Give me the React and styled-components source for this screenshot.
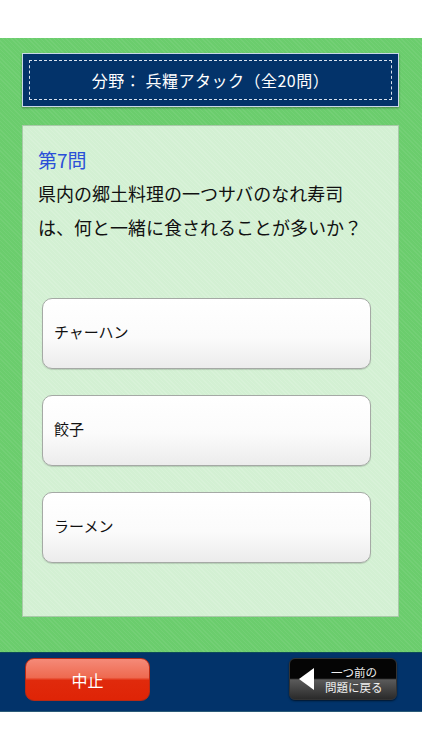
import React from "react";
import styled, { createGlobalStyle } from "styled-components";

const Global = createGlobalStyle`
  html, body { margin: 0; padding: 0; background: #fff; }
  body { font-family: "Noto Sans CJK JP", "Noto Sans", sans-serif; }
`;

const Page = styled.div`
  width: 422px;
  height: 750px;
  display: flex;
  flex-direction: column;
  background: #fff;
`;

const TopGap = styled.div`
  height: 38px;
  flex: none;
`;

const Field = styled.main`
  height: 614px;
  flex: none;
  box-sizing: border-box;
  padding: 15px 23px 0 22px;
  background-color: #6bcd6d;
  background-image: repeating-linear-gradient(45deg, rgba(255,255,255,0.06) 0 1px, transparent 1px 3px);
  display: flex;
  flex-direction: column;
  gap: 18px;
`;

const Banner = styled.header`
  height: 54px;
  box-sizing: border-box;
  background: #03336a;
  border: 1px solid #c8d8e8;
  box-shadow: 0 1px 2px rgba(0,0,0,0.35);
  padding: 6px;
  display: flex;
`;

const BannerInner = styled.div`
  flex: 1;
  border: 1.5px dashed #d8e2ee;
  display: flex;
  align-items: center;
  justify-content: center;
  color: #fff;
  font-size: 16px;
  letter-spacing: 0.5px;
`;

const Card = styled.section`
  height: 492px;
  box-sizing: border-box;
  background-color: #d3f0d3;
  background-image: repeating-linear-gradient(45deg, rgba(255,255,255,0.12) 0 1px, transparent 1px 3px);
  border: 1px solid #a9c9a9;
  padding: 20px 27px 0 15px;
  display: flex;
  flex-direction: column;
`;

const Number = styled.div`
  color: #2a4fd8;
  font-size: 19px;
  line-height: 28px;
`;

const Question = styled.p`
  margin: 2px 0 0;
  color: #111;
  font-size: 18px;
  line-height: 34px;
`;

const Options = styled.div`
  margin-top: 54px;
  padding-left: 4px;
  display: flex;
  flex-direction: column;
  gap: 26px;
`;

const Option = styled.button`
  height: 71px;
  box-sizing: border-box;
  border: 1px solid #a5a9a5;
  border-radius: 10px;
  background: linear-gradient(#ffffff 0%, #fbfbfb 55%, #ececec 100%);
  box-shadow: 0 1px 1px rgba(0,0,0,0.15);
  padding: 0 0 4px 11px;
  text-align: left;
  font-family: inherit;
  font-size: 15px;
  color: #111;
`;

const Footer = styled.footer`
  height: 60px;
  flex: none;
  box-sizing: border-box;
  background: #02336a;
  border-top: 1px solid #0d4a5a;
  border-bottom: 1px solid #2a5a78;
  padding: 5px 25px 0 25px;
  display: flex;
  justify-content: space-between;
  align-items: flex-start;
`;

const StopButton = styled.button`
  width: 125px;
  height: 43px;
  border: 1px solid #b82a14;
  border-radius: 9px;
  background: linear-gradient(#f58a78 0%, #ee6a50 45%, #e02a0c 52%, #df2406 100%);
  color: #fff;
  font-family: inherit;
  font-size: 16px;
  padding: 0;
`;

const BackButton = styled.button`
  width: 108px;
  height: 42px;
  border: 1px solid #333;
  border-radius: 6px;
  background: linear-gradient(#050505 0%, #050505 48%, #5a5a5a 52%, #2a2a2a 100%);
  box-shadow: 0 1px 2px rgba(0,0,0,0.6);
  display: flex;
  align-items: center;
  gap: 10px;
  padding: 0 0 0 8px;
  color: #fff;
  font-family: inherit;
`;

const BackLabel = styled.span`
  display: flex;
  flex-direction: column;
  text-align: left;
  color: #f0f0f0;
`;

const LabelLine = styled.span`
  display: block;
  font-size: 11.5px;
  line-height: 16px;
  height: 15px;
  padding-left: ${(p) => (p.$indent ? "6px" : "0")};
`;

const BottomGap = styled.div`
  flex: 1;
`;

const options = ["チャーハン", "餃子", "ラーメン"];

export default function App() {
  return (
    <>
      <Global />
      <Page>
        <TopGap />
        <Field>
          <Banner>
            <BannerInner>分野： 兵糧アタック（全20問）</BannerInner>
          </Banner>
          <Card>
            <Number>第7問</Number>
            <Question>
              県内の郷土料理の一つサバのなれ寿司
              <br />
              は、何と一緒に食されることが多いか？
            </Question>
            <Options>
              {options.map((o) => (
                <Option key={o}>{o}</Option>
              ))}
            </Options>
          </Card>
        </Field>
        <Footer>
          <StopButton>中止</StopButton>
          <BackButton>
            <svg width="17" height="24" viewBox="0 0 17 24">
              <polygon points="16,1 16,23 1,12" fill="#fff" />
            </svg>
            <BackLabel>
              <LabelLine $indent>一つ前の</LabelLine>
              <LabelLine>問題に戻る</LabelLine>
            </BackLabel>
          </BackButton>
        </Footer>
        <BottomGap />
      </Page>
    </>
  );
}
